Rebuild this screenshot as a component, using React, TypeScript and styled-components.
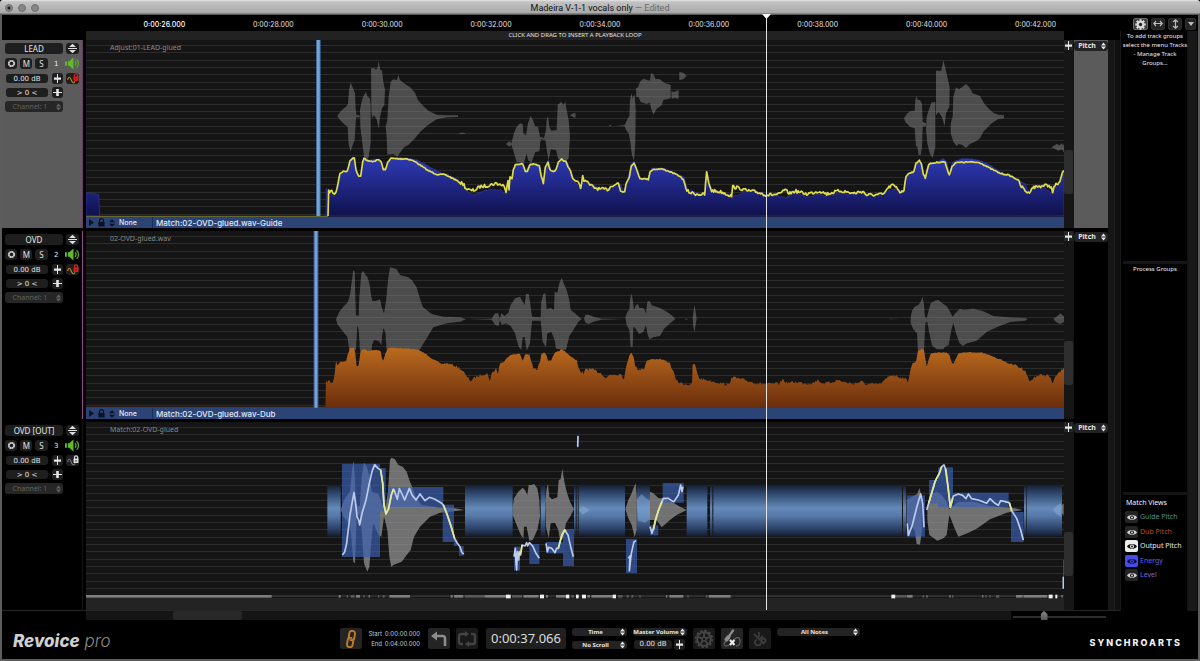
import React from "react";
import styled, { createGlobalStyle } from "styled-components";

const SANS = `"Noto Sans", "Open Sans", sans-serif`;
const UI = `Inter, "Liberation Sans", sans-serif`;
const WIDE = `"DejaVu Sans", "Noto Sans", sans-serif`;

const GlobalStyle = createGlobalStyle`
  * { box-sizing: border-box; }
  body { margin: 0; background: #000; }
  button, select, input { font: inherit; color: inherit; margin: 0; padding: 0; border: 0; }
  h1, h2, p, ul { margin: 0; padding: 0; font-weight: normal; }
  svg { display: block; }
`;

/* ---------- window frame ---------- */

const Window = styled.div`
  min-height: 100vh;
  display: flex;
  flex-direction: column;
  background: #000;
  color: #d6d6d6;
  font-family: ${SANS};
  font-size: 8px;
  line-height: 10px;
`;

const TitleBar = styled.header`
  flex: none;
  height: 15px;
  display: grid;
  grid-template-columns: 1fr auto 1fr;
  align-items: center;
  padding: 0 5px;
  border-radius: 3px 3px 0 0;
  background: linear-gradient(#e4e4e4 0, #c2c2c2 2px, #a9a9a9 13px, #5c5c5c 14px);
`;

const Lights = styled.div`
  display: flex;
  gap: 5px;
`;

const Light = styled.button<{ $dot?: boolean }>`
  width: 8px;
  height: 8px;
  border-radius: 50%;
  border: 1px solid #707070;
  background: ${(p) => (p.$dot ? "radial-gradient(#222 1px, #868686 2px)" : "#868686")};
`;

const Title = styled.h1`
  font-family: Roboto, "Liberation Sans", sans-serif;
  font-size: 9px;
  line-height: 12px;
  color: #111;
  span { color: #6a6a6a; }
`;

const Body = styled.div`
  flex: 1;
  display: flex;
  flex-direction: column;
  border: 2px solid #5c5c5c;
  border-top: 0;
`;

const Work = styled.div`
  flex: 1;
  display: flex;
`;

const Editor = styled.main`
  position: relative;
  flex: 1;
  min-width: 0;
  display: flex;
  flex-direction: column;
`;

/* ---------- ruler ---------- */

const Ruler = styled.div`
  flex: none;
  height: 16px;
  display: grid;
  grid-template-columns: repeat(9, 1fr);
  padding: 4px 30px 0 108px;
  font-family: ${UI};
  font-size: 7px;
  line-height: 12px;
  text-align: center;
  color: #e0e0e0;
  span:first-child { color: #fff; font-weight: 500; }
`;

const LoopBar = styled.div`
  flex: none;
  height: 9px;
  margin: 0 56px 0 84px;
  background: #222;
  text-align: center;
  font-family: ${SANS};
  font-size: 6px;
  line-height: 9px;
  color: #e2e2e2;
`;

/* ---------- tracks ---------- */

const Tracks = styled.div`
  flex: 1;
  display: flex;
  flex-direction: column;
  gap: 3px;
`;

const TrackRow = styled.section`
  flex: 1;
  min-height: 188px;
  display: grid;
  grid-template-columns: 81px minmax(0, 1fr) 10px 34px 12px;
  background: #000;
`;

const TrackHead = styled.div<{ $selected?: boolean; $edge: string }>`
  display: flex;
  flex-direction: column;
  gap: 4px;
  padding: 3px 2px 0 3px;
  border-right: 1px solid ${(p) => p.$edge};
  background: ${(p) => (p.$selected ? "#5b5b5b" : "#000")};
`;

const HeadRow = styled.div<{ $slim?: boolean }>`
  display: flex;
  align-items: center;
  gap: 3px;
  height: ${(p) => (p.$slim ? 9 : 11)}px;
`;

const Chip = styled.button<{ $w: number }>`
  width: ${(p) => p.$w}px;
  height: 11px;
  border-radius: 3px;
  background: #1e1e1e;
  color: #e0e0e0;
  display: flex;
  align-items: center;
  justify-content: center;
`;

const NameInput = styled.input`
  width: 58px;
  height: 11px;
  border-radius: 3px;
  background: #1e1e1e;
  color: #e6e6e6;
  text-align: center;
  font-family: ${SANS};
  font-size: 8px;
`;

const ValueInput = styled.input<{ $w: number }>`
  width: ${(p) => p.$w}px;
  height: 9px;
  margin: 0 1px;
  border-radius: 3px;
  background: #1e1e1e;
  color: #e0e0e0;
  text-align: center;
  font-family: ${WIDE};
  font-size: 7px;
`;

const TrackNumber = styled.span`
  width: 12px;
  text-align: center;
  font-family: ${WIDE};
  font-size: 7px;
  color: #ececec;
`;

const SelectBox = styled.span<{ $dim?: boolean; $w?: number; $h: number }>`
  position: relative;
  display: block;
  width: ${(p) => (p.$w ? `${p.$w}px` : "100%")};
  height: ${(p) => p.$h}px;
  border-radius: 3px;
  background: ${(p) => (p.$dim ? "#262626" : "#232323")};
  color: ${(p) => (p.$dim ? "#626262" : "#e6e6e6")};
  svg { position: absolute; right: 2px; top: 50%; margin-top: -4px; pointer-events: none; }
  select {
    display: block;
    appearance: none;
    width: 100%;
    height: 100%;
    padding-right: 8px;
    background: none;
    outline: 0;
    text-align: center;
    text-align-last: center;
    font-family: ${SANS};
    font-size: ${(p) => (p.$h > 9 ? 7 : 6)}px;
    font-weight: ${(p) => (p.$dim ? 400 : 700)};
    line-height: ${(p) => p.$h}px;
  }
`;

const Lane = styled.div`
  margin-left: 3px;
  position: relative;
  display: flex;
  flex-direction: column;
  background: #151515;
`;

const LaneSvg = styled.svg`
  flex: 1;
  width: 100%;
  height: 0;
`;

const ClipLabel = styled.p`
  position: absolute;
  left: 24px;
  top: 3px;
  font-family: ${SANS};
  font-size: 7px;
  color: #8a8a8a;
`;

const ClipStrip = styled.div`
  flex: none;
  height: 11px;
  display: flex;
  align-items: center;
  padding-left: 3px;
  background: #2b4375;
  color: #e2e8f3;
  font-family: ${UI};
  font-size: 8px;
  font-weight: 500;
`;

const StripControls = styled.div`
  display: flex;
  align-items: center;
  gap: 4px;
  width: 64px;
  height: 11px;
  border-right: 1px solid #1e2f55;
`;

const StripButton = styled.button`
  background: none;
  height: 9px;
  display: flex;
  align-items: center;
`;

const StripSelect = styled.select`
  appearance: none;
  background: none;
  height: 11px;
  line-height: 11px;
  && { font-size: 7px; }
`;

const StripName = styled.span`
  padding-left: 3px;
`;

const ZoomColumn = styled.div`
  background: #161616;
  display: flex;
  flex-direction: column;
  button { width: 9px; height: 10px; background: #262626; display: grid; place-items: center; }
`;

const ZoomThumb = styled.div`
  height: 44px;
  margin: 100px 1px 0 0;
  border-radius: 2px;
  background: #2e2e2e;
`;

const PitchColumn = styled.div<{ $selected?: boolean }>`
  background: ${(p) => (p.$selected ? "#5b5b5b" : "#000")};
  padding-top: 1px;
`;

const Gutter = styled.div`
  margin-bottom: -3px;
  background: linear-gradient(90deg, #161616 6px, #202020 6px, #202020 7px, #111 7px);
  section:last-child > & { margin-bottom: 0; }
`;

const PlayheadArea = styled.div`
  position: absolute;
  top: 0;
  bottom: 10px;
  left: 84px;
  right: 56px;
  pointer-events: none;
`;

const Playhead = styled.div`
  position: absolute;
  top: 0;
  bottom: 0;
  left: 69.5%;
  width: 1px;
  background: #e4e4e4;
  svg { position: absolute; top: -1px; left: -4px; }
`;

const ScrollRow = styled.div`
  flex: none;
  height: 10px;
  display: flex;
  border-top: 1px solid #262626;
  padding-left: 84px;
`;

const ScrollTrack = styled.div`
  flex: 1;
  background: #151515;
`;

const ScrollThumb = styled.div`
  width: 7.5%;
  height: 9px;
  margin-left: 9.4%;
  border-radius: 2px;
  background: #282828;
`;

const ZoomSlider = styled.input`
  appearance: none;
  width: 93px;
  height: 9px;
  margin: 0 14px 0 2px;
  background: linear-gradient(transparent 5px, #2e2e2e 5px, #2e2e2e 7px, transparent 7px);
  &::-webkit-slider-thumb {
    appearance: none;
    width: 7px;
    height: 9px;
    background: linear-gradient(#8a8a8a, #555);
    clip-path: polygon(50% 0, 100% 35%, 100% 100%, 0 100%, 0 35%);
  }
`;

/* ---------- side panel ---------- */

const Side = styled.aside`
  flex: none;
  width: 78px;
  display: flex;
  flex-direction: column;
`;

const SideTools = styled.div`
  height: 16px;
  display: flex;
  justify-content: flex-end;
  align-items: center;
  gap: 3px;
  padding: 1px 2px 0 0;
`;

const ToolButton = styled.button<{ $on?: boolean; $w: number }>`
  width: ${(p) => p.$w}px;
  height: 12px;
  border-radius: 2px;
  background: ${(p) => (p.$on ? "#3c3c3c" : "#242424")};
  border: 1px solid ${(p) => (p.$on ? "#6a6a6a" : "#2e2e2e")};
  display: grid;
  place-items: center;
`;

const SideBody = styled.div`
  flex: 1;
  display: flex;
  flex-direction: column;
  margin-bottom: 9px;
  padding: 0 11px 0 2px;
  background: linear-gradient(270deg, #101010 1px, #191919 2px, #191919 9px, #111 11px, transparent 11px);
  border-left: 1px solid #181818;
`;

const SidePane = styled.section<{ $grow: number }>`
  flex: ${(p) => p.$grow} 0 0;
  border-bottom: ${(p) => (p.$grow > 200 ? "3px solid #151515" : "0")};
  background: #000;
`;

const SideNote = styled.p`
  margin: 0 -3px;
  text-align: center;
  font-family: ${SANS};
  font-size: 6px;
  line-height: 9px;
  color: #f0f0f0;
  padding-top: 1px;
`;

const ViewsTitle = styled.h2`
  padding: 3px 0 2px 3px;
  font-size: 7px;
  line-height: 10px;
  color: #f2f2f2;
`;

const ViewItem = styled.label<{ $color: string }>`
  display: flex;
  align-items: center;
  gap: 2px;
  height: 14px;
  margin: 0 0 1px 2px;
  font-size: 7px;
  white-space: nowrap;
  color: ${(p) => p.$color};
  &:nth-of-type(even) { margin-bottom: 0; }
`;

const EyeBox = styled.span<{ $bg: string; $eye: string }>`
  position: relative;
  width: 13px;
  height: 12px;
  border-radius: 2px;
  background: ${(p) => p.$bg};
  color: ${(p) => p.$eye};
  display: grid;
  place-items: center;
  input { position: absolute; inset: 0; opacity: 0; }
`;

/* ---------- transport ---------- */

const Transport = styled.footer`
  flex: none;
  height: 39px;
  display: flex;
  align-items: center;
  gap: 6px;
  padding: 0 16px 2px 11px;
`;

const Brand = styled.div`
  flex: 0 1 321px;
  font-family: ${UI};
  font-style: italic;
  font-size: 17px;
  line-height: 22px;
  font-weight: 300;
  color: #8b8b8b;
  padding-top: 5px;
  white-space: nowrap;
  b { font-weight: 800; color: #d0d0d0; }
`;

const Square = styled.button<{ $dim?: boolean }>`
  flex: none;
  width: 22px;
  height: 21px;
  border-radius: 2px;
  background: ${(p) => (p.$dim ? "#191919" : "#242424")};
  display: grid;
  place-items: center;
`;

const Range = styled.dl`
  flex: none;
  width: 54px;
  margin: 0;
  display: grid;
  grid-template-columns: 14px 36px;
  column-gap: 2px;
  font-family: ${UI};
  font-size: 6px;
  line-height: 10px;
  text-align: right;
  color: #cacaca;
  dt, dd { margin: 0; }
`;

const Clock = styled.output`
  flex: none;
  width: 80px;
  height: 21px;
  margin-left: 2px;
  border-radius: 2px;
  background: #1f1f1f;
  text-align: center;
  font-family: ${SANS};
  font-size: 13px;
  line-height: 21px;
  color: #dcdcdc;
`;

const Stack = styled.div<{ $w: number }>`
  flex: none;
  width: ${(p) => p.$w}px;
  height: 21px;
  display: flex;
  flex-direction: column;
  justify-content: space-between;
`;

const Volume = styled.div`
  display: flex;
  gap: 1px;
  height: 10px;
  align-items: center;
`;

const Company = styled.div`
  margin-left: auto;
  padding-top: 8px;
  font-family: ${UI};
  font-size: 9px;
  font-weight: 800;
  letter-spacing: 2px;
  color: #f2f2f2;
`;

/* ---------- icons ---------- */

const UpDown = () => (
  <svg width="5" height="8" viewBox="0 0 5 8" fill="currentColor">
    <path d="M0 3.4 2.5.6 5 3.4ZM0 4.6 2.5 7.4 5 4.6Z" />
  </svg>
);
const HeightIcon = () => (
  <svg width="11" height="11" viewBox="0 0 11 11" fill="#dcdcdc">
    <path d="M2 4 5.500.7 9 4ZM1 5h9v1H1ZM2 7 5.500 10.300 9 7Z" />
  </svg>
);
const RingIcon = () => (
  <svg width="9" height="9" viewBox="0 0 9 9">
    <circle cx="4.500" cy="4.500" r="2.700" fill="none" stroke="#cfcfcf" strokeWidth="1.800" strokeDasharray="1.900 .2" />
  </svg>
);
const SpeakerIcon = () => (
  <svg width="16" height="13" viewBox="0 0 16 13">
    <path d="M0 4h2v5H0ZM3 4h1.500L9 0v13L4.500 9H3Z" fill="#63b82e" />
    <path d="M10.500 4a3.200 3.200 0 0 1 0 5M12.300 2a6 6 0 0 1 0 9" fill="none" stroke="#58a828" strokeWidth="1.400" />
  </svg>
);
const FaderIcon = ({ wide }: { wide?: boolean }) => (
  <svg width="9" height="9" viewBox="0 0 9 9" fill="#e6e6e6">
    {wide ? <path d="M0 4h9v1H0ZM3.200 1h2.600v7H3.200Z" /> : <path d="M4 0h1v9H4ZM1 3.400h7v2.400H1Z" />}
  </svg>
);
const CurveLock = ({ locked }: { locked: boolean }) => (
  <svg width="12" height="11" viewBox="0 0 12 11">
    <path d="M.6 7C1.500 3.500 3 3.500 4 6.500S6.500 11 8 8.500" fill="none" stroke={locked ? "#b8862c" : "#777"} strokeWidth="1.100" />
    <path d="M7.500 4V2.500a1.600 1.600 0 0 1 3.200 0V4" fill="none" stroke={locked ? "#d42020" : "#ddd"} strokeWidth="1.200" />
    <rect x="6.500" y="3.500" width="5" height="4.500" rx=".8" fill={locked ? "#d42020" : "#ddd"} />
    <rect x="8.500" y="5" width="1" height="1.600" fill={locked ? "#8a1010" : "#222"} />
  </svg>
);
const EyeIcon = () => (
  <svg width="10" height="7" viewBox="0 0 10 7">
    <path d="M0 3.500C2 .3 8 .3 10 3.500 8 6.700 2 6.700 0 3.500ZM5 1.500a2 2 0 1 0 .01 0Z" fill="currentColor" fillRule="evenodd" />
    <circle cx="5" cy="3.500" r="1" fill="currentColor" />
  </svg>
);
const GearIcon = ({ size, color, hole = 3 }: { size: number; color: string; hole?: number }) => (
  <svg width={size} height={size} viewBox="-10 -10 20 20">
    <g fill={color}>
      {[0, 45, 90, 135].map((a) => (
        <rect key={a} x="-2" y="-9.500" width="4" height="19" transform={`rotate(${a})`} />
      ))}
      <circle r="7" />
    </g>
    <circle r={hole} fill="#242424" />
  </svg>
);
const WheelIcon = () => (
  <svg width="20" height="20" viewBox="-10 -10 20 20" stroke="#454545" fill="none">
    <circle r="8.200" strokeWidth="2" strokeDasharray="2.600 1.690" />
    <circle r="6.800" strokeWidth="1.800" />
    <circle r="2" strokeWidth="1.500" />
    <path d="M0-2v-4M1.900-.6 5.700-1.900M1.200 1.600 3.500 4.900M-1.200 1.600-3.500 4.900M-1.900-.6-5.700-1.900" strokeWidth="1.800" />
  </svg>
);
const LinkIcon = () => (
  <svg width="12" height="18" viewBox="0 0 12 18" fill="none" stroke="#c07a2e" strokeWidth="1.900" strokeLinecap="round">
    <path d="M3.500 8.500 4.300 3.500A2.600 2.600 0 0 1 10 3.800L9.200 8.300A2.600 2.600 0 0 1 5.500 10" />
    <path d="M8.500 9.500 7.700 14.500A2.600 2.600 0 0 1 2 14.200L2.800 9.700A2.600 2.600 0 0 1 6.500 8" />
  </svg>
);
const UndoIcon = () => (
  <svg width="16" height="16" viewBox="0 0 16 16">
    <path d="M5 5h6.500a2.500 2.500 0 0 1 2.500 2.500V15" fill="none" stroke="#8d8d8d" strokeWidth="2.600" />
    <path d="M0 5 6 .5v9Z" fill="#8d8d8d" />
  </svg>
);
const LoopIcon = () => (
  <svg width="20" height="16" viewBox="0 0 20 16">
    <path d="M6 13H4a2 2 0 0 1-2-2V5a2 2 0 0 1 2-2h4M14 3h2a2 2 0 0 1 2 2v6a2 2 0 0 1-2 2h-4" fill="none" stroke="#444" strokeWidth="2.400" />
    <path d="M8 0v6l4-3ZM12 10v6l-4-3Z" fill="#444" />
  </svg>
);
const MicIcon = () => (
  <svg width="20" height="20" viewBox="0 0 20 20" fill="none">
    <path d="M11 1.500 6.500 8" stroke="#8d8d8d" strokeWidth="2.200" strokeLinecap="round" />
    <path d="M6.500 8 4.500 10.500" stroke="#8d8d8d" strokeWidth="4" strokeLinecap="round" />
    <path d="M4 12c-5 5 1 7 5 2s8-8 9-3-2 6-4 6" stroke="#666" strokeWidth="1.100" />
    <path d="m8 11 4.500 5M12.500 11 8 16" stroke="#eee" strokeWidth="2" />
  </svg>
);
const MutedIcon = () => (
  <svg width="16" height="16" viewBox="0 0 16 16" fill="none" stroke="#3b3b3b" strokeWidth="1.800">
    <path d="m2 3 10 10M7 1v5M5 8.500a3 3 0 1 0 4 3M11 5 8 8" />
    <circle cx="11.500" cy="9.500" r="2" />
  </svg>
);
const LockIcon = () => (
  <svg width="7" height="9" viewBox="0 0 7 9">
    <path d="M1.500 4V2.700a2 2 0 0 1 4 0V4" fill="none" stroke="#0c1222" strokeWidth="1.200" />
    <rect x=".4" y="3.900" width="6.200" height="4.600" fill="#0c1222" />
  </svg>
);

/* ---------- waveform data ---------- */

type Pt = [number, number];

// Three units per pixel; every list is relative to the start of its section.
const section = (dx: number, dy: number, data: string): Pt[] =>
  data
    .trim()
    .split(/\s+/)
    .map((pair) => {
      const [x, y] = pair.split(",").map(Number);
      return [x + dx, y + dy] as Pt;
    });

const toPath = (pts: Pt[], close = false) =>
  pts.map(([x, y], i) => `${i ? "L" : "M"}${x.toFixed(1)} ${y.toFixed(1)}`).join("") + (close ? "Z" : "");

// Breaks long segments into short ones with a small repeatable ripple.
const ripple = (pts: Pt[], amp: number, quietFrom: number): Pt[] => {
  let seed = 7;
  const rnd = () => {
    seed = (seed * 16807) % 2147483647;
    return seed / 2147483647 - 0.5;
  };
  const out: Pt[] = [pts[0]];
  for (let i = 1; i < pts.length; i++) {
    const [x0, y0] = pts[i - 1];
    const [x1, y1] = pts[i];
    const n = Math.max(1, Math.floor((x1 - x0) / 3));
    for (let k = 1; k <= n; k++) {
      const y = y0 + ((y1 - y0) * k) / n;
      const a = y > 520 ? 0 : y > quietFrom ? amp : amp / 3;
      out.push([x0 + ((x1 - x0) * k) / n, y + rnd() * a]);
    }
  }
  return out;
};

const leadLine: Pt[] = [
  ...section(642, -30, `84,558 86,485 95,484 103,492 108,488 114,458 120,430 124,428 130,424 142,424 150,392 158,384 163,385 168,420 176,438 182,438 188,395 192,385 205,394 220,394 236,389 243,395 250,418 256,420 264,395 272,385 300,387 318,386 335,390 350,398 370,412 385,422 410,433 435,434 460,446 478,456 492,464 498,476 512,482 525,480 540,470 560,467 590,460 600,464 612,466 618,490 624,450 627,475 630,440 636,445 640,420 646,405 655,402 668,402 676,424 682,424 690,403 705,403 718,408 724,440 730,458 736,410 744,396 750,420 760,424 768,420 775,398 785,388 798,396 804,410 812,424 818,445 826,452 834,455 842,478 848,435 852,455 856,450 866,462 880,472 900,478 925,478 935,466 955,460 962,484 974,484 978,460 988,440 994,408 1002,398 1010,420 1020,445 1045,448 1050,425 1060,418 1085,417 1110,425 1138,438`),
  ...section(1782, -120, `0,530 10,538 18,570 30,578 50,582 74,584 77,550 80,515 86,550 95,572 125,576 155,588 158,560 180,565 200,572 230,576 260,585 300,583 312,570 330,580 345,573 380,582 420,573 440,582 480,572 510,578 520,580 548,574 560,585 600,584 614,582 618,570 636,555 652,565 660,576 672,570 678,530 685,520 702,515 708,490 718,480 724,492 730,522 736,534 746,493 755,490 780,486 795,486 802,510 808,524 816,500 826,488 870,486 900,488 930,505 960,520 985,525 1000,532 1014,540 1024,560 1045,580 1055,564 1070,560 1100,556 1114,560 1118,582 1122,560 1140,545 1148,515 1152,512`),
];

const leadFill: Pt[] = [
  ...section(642, -30, `78,558 79,478 86,490 103,500 110,480 120,440 130,424 142,424 150,392 158,380 165,410 176,440 182,438 190,390 205,390 236,387 250,418 256,420 266,390 290,382 320,384 350,390 385,408 420,428 440,432 470,448 492,465 502,485 520,496 535,490 545,482 580,478 608,482 618,492 626,460 636,440 645,405 668,400 676,424 690,401 718,406 730,458 740,400 745,390 752,422 768,420 777,396 785,386 800,392 815,430 825,455 842,478 848,455 870,462 900,478 930,475 960,462 974,484 984,445 994,400 1002,394 1012,425 1022,445 1045,448 1055,415 1085,414 1110,422 1138,436`),
  ...section(1782, -120, `0,528 12,530 22,568 50,580 76,580 79,513 86,548 98,574 130,580 155,592 180,585 200,572 215,568 240,578 270,588 300,590 320,592 345,580 380,590 420,582 440,588 480,578 510,584 545,578 560,588 600,586 618,575 640,566 670,572 680,525 702,514 714,480 722,488 734,530 746,492 775,484 790,475 800,485 808,522 818,486 845,477 875,476 905,484 935,498 960,516 1000,530 1014,540 1035,552 1048,578 1058,564 1085,558 1104,572 1116,584 1125,562 1142,545 1152,512`),
];

const dubFill: Pt[] = [
  ...section(642, -3, `76,534 78,455 86,452 98,460 104,430 108,392 112,405 120,396 138,394 144,370 150,355 162,352 166,370 170,405 176,405 182,362 192,358 205,362 232,360 242,364 246,385 250,390 256,372 264,355 280,353 310,355 340,357 360,362 380,374 400,388 425,402 440,400 460,405 480,415 490,425 498,438 512,452 530,440 550,432 562,432 570,450 576,430 588,415 594,430 600,400 610,398 618,385 630,376 645,372 660,372 668,392 676,372 688,374 694,395 700,415 712,420 720,395 724,372 732,366 738,372 744,392 754,390 764,370 785,358 800,368 815,382 830,390 836,415 842,430 848,425 850,438 856,415 880,420 905,430 918,445 930,434 965,432 972,450 980,405 988,376 994,366 1000,380 1006,408 1015,418 1032,416 1040,392 1055,388 1080,387 1095,392 1110,400 1120,425 1128,450 1138,458`),
  ...section(1782, -3, `0,458 12,462 36,464 38,404 44,402 50,425 58,445 90,452 125,460 148,465 154,440 175,446 200,452 230,460 260,463 298,460 308,448 320,458 350,456 380,461 400,458 414,450 428,460 450,458 472,450 495,457 520,461 545,455 560,464 600,462 614,452 630,436 640,435 655,440 672,444 684,454 692,415 698,400 708,395 714,362 726,357 732,360 736,385 740,408 746,390 752,370 780,367 800,367 808,375 814,395 820,405 826,388 836,370 870,366 905,368 935,378 965,390 985,400 1005,405 1025,415 1036,420 1044,445 1052,455 1064,440 1085,435 1105,436 1112,448 1118,458 1130,435 1144,422 1152,410`),
];

const leadShapes: Pt[][] = [
  ...[
    "112,258 120,246 130,236 138,230 144,222 147,180 152,158 158,172 165,190 167,240 170,256 178,256 180,262 168,262 164,330 158,345 152,364 146,345 143,290 132,282 120,270",
    "180,240 186,210 192,195 198,186 202,200 210,205 212,230 212,340 206,380 200,392 192,380 186,330 181,290",
    "213,115 222,114 226,118 232,116 236,92 240,118 246,122 250,155 255,180 253,225 246,235 240,262 236,298 230,268 222,256 216,264 214,240",
    "257,290 262,270 266,200 272,155 280,148 290,150 295,135 300,150 312,160 330,172 345,188 355,212 370,228 385,242 410,254 440,256 474,256 474,261 440,262 410,268 385,284 360,306 345,325 325,345 312,352 300,368 292,380 280,372 262,374 260,320",
    "476,309 490,308 500,311 480,312",
    "618,342 628,334 634,340 642,310 650,290 660,280 668,282 670,310 678,316 684,280 692,258 700,272 706,290 714,290 720,320 732,324 738,300 740,270 744,258 748,290 754,302 770,300 773,225 784,215 790,226 796,216 800,240 806,270 810,320 806,385 800,392 775,388 768,360 752,358 746,392 742,370 736,330 722,328 718,364 706,366 694,398 684,390 680,370 672,398 650,396 640,362 634,344 628,350",
    "810,256 820,250 827,250 826,264 818,260",
    "928,285 933,285 933,289 928,289",
    "948,287 974,286 982,268 988,258 990,210 994,190 998,205 1004,192 1007,240 1006,340 1002,392 996,375 990,330 986,310 978,300 974,289",
    "1008,175 1014,172 1020,155 1030,146 1042,150 1050,152 1053,130 1060,132 1066,146 1080,148 1092,158 1112,165 1112,205 1090,210 1085,226 1070,236 1060,254 1053,235 1050,218 1040,222 1022,216 1015,200 1009,200",
    "1114,184 1122,186 1136,180 1136,206 1125,204 1115,206",
    "1138,126 1150,128 1160,138 1150,148 1138,150",
  ].map((s) => section(642, -30, s)),
  ...[
    "672,355 680,342 690,334 704,332 706,300 710,288 713,300 720,300 726,312 728,365 738,370 738,378 728,380 726,440 722,465 716,465 712,440 708,438 704,385 690,380 676,366",
    "740,350 748,325 754,308 766,305 766,440 758,474 750,462 742,430 738,390",
    "768,212 784,212 790,180 796,205 802,230 809,262 808,320 798,340 794,378 786,352 776,336 768,346",
    "812,370 818,350 820,290 828,262 836,268 846,262 858,252 868,262 878,280 900,288 912,310 925,325 940,338 955,344 972,346 972,355 955,357 935,370 910,395 900,415 885,425 870,432 858,444 846,434 836,432 830,438 820,425 812,400",
    "1114,442 1130,432 1140,436 1144,430 1150,436 1152,428 1152,458 1146,448 1136,452",
  ].map((s) => section(1782, -120, s)),
];

const dubShapes: Pt[][] = [
  ...[
    "108,268 118,245 132,228 144,216 150,195 156,150 160,120 164,125 166,200 168,255 176,258 178,200 184,130 190,122 196,135 202,140 208,160 214,200 218,214 230,212 240,208 246,235 252,250 258,215 264,150 270,112 280,114 290,118 300,135 325,142 335,150 350,172 358,200 368,230 380,240 395,252 430,260 480,262 498,268 480,275 440,280 400,292 380,325 364,350 358,362 260,362 256,305 250,295 246,320 244,345 236,332 222,330 216,345 214,364 180,362 176,300 172,285 168,360 148,360 142,320 125,300 112,282",
    "498,267 575,266 585,250 595,250 597,262 600,264 604,250 614,258 625,248 632,225 645,205 660,200 668,215 674,225 678,192 686,192 690,215 696,260 722,262 724,215 730,192 736,190 740,238 752,234 762,240 764,185 772,188 778,160 785,143 792,162 800,180 808,210 812,240 825,250 838,262 845,267 835,275 820,300 808,318 798,360 768,356 764,330 754,306 742,310 738,352 728,335 722,272 696,272 690,340 680,362 674,320 668,322 664,360 656,350 645,310 632,288 618,280 606,284 600,272 595,288 585,284 575,269",
    "852,267 856,254 866,254 880,260 905,266 976,267 905,269 880,275 866,282 857,278",
    "976,262 982,245 988,240 990,210 995,190 999,215 1002,240 1008,225 1014,222 1018,234 1030,234 1038,250 1042,215 1048,212 1055,226 1080,234 1100,245 1115,256 1126,267 1108,282 1092,296 1080,318 1060,322 1048,328 1042,310 1038,285 1030,305 1018,312 1006,295 1000,290 998,350 992,350 988,300 980,285",
  ].map((s) => section(642, -3, s)),
  ...[
    "38,267 41,240 43,225 46,240 50,266 46,290 43,306 40,290",
    "16,266 22,266 22,269 16,269",
    "628,266 660,267 628,268",
    "692,262 696,242 704,230 715,225 722,215 728,200 732,225 735,260 740,265 745,245 752,220 765,212 775,210 790,222 800,228 810,245 818,260 826,250 840,236 850,240 880,236 910,244 940,258 980,262 1035,264 1043,268 1035,272 990,276 950,292 920,306 890,332 862,340 848,348 838,338 828,310 820,278 814,300 806,345 795,350 790,358 770,358 756,346 748,310 742,275 736,280 732,362 714,362 711,310 700,298 692,280",
    "1120,267 1132,258 1142,250 1152,260 1152,276 1140,282 1128,276",
  ].map((s) => section(1782, -3, s)),
];

const outShapes: Pt[][] = [
  ...[
    "93,270 98,250 108,230 120,215 126,150 131,122 135,180 137,250 145,262 150,255 155,170 162,128 170,140 178,165 185,215 205,222 215,250 222,268 228,255 234,215 240,120 244,113 255,118 265,135 278,140 290,155 298,180 308,205 318,235 335,255 380,262 430,264 464,270 430,274 390,278 360,290 330,320 312,350 302,390 290,405 275,425 250,435 244,442 238,410 232,330 222,290 214,350 205,345 190,310 185,350 178,440 172,455 162,430 155,330 148,280 140,290 135,430 130,425 124,350 118,310 100,290",
    "608,262 612,235 625,215 638,203 645,210 652,225 656,195 664,195 672,192 682,205 688,240 690,290 682,330 668,360 658,362 650,320 642,320 640,356 630,340 618,310 608,285",
    "706,240 710,205 714,192 718,230 726,238 742,232 746,180 752,178 757,146 763,185 770,215 780,245 792,268 780,290 768,310 760,355 750,360 745,330 735,308 722,310 716,355 708,320",
    "946,268 955,240 965,220 970,205 977,190 980,230 980,330 974,352 965,315 955,295",
    "1020,215 1030,220 1045,234 1065,236 1090,248 1110,260 1130,270 1100,285 1080,300 1055,322 1040,300 1020,300",
  ].map((s) => section(672, -6, s)),
  ...[
    "680,240 700,228 712,222 718,204 724,225 726,330 720,374 710,372 704,330 680,305",
    "742,260 750,225 770,215 785,225 800,245 808,268 814,262 835,246 880,245 930,258 1000,264 1028,270 980,278 930,298 890,326 862,340 835,350 822,320 808,285 800,345 790,355 772,362 748,345 742,300",
    "1146,255 1151,250 1151,285 1146,280",
  ].map((s) => section(1782, -6, s)),
];

// Unvoiced bands: start and end of each.
const bands: Pt[] = [
  [724, 764], [1137, 1280], [1364, 1378], [1464, 1469], [1472, 1475], [1478, 1617],
  [1652, 1692], [1802, 1864], [1872, 1879], [1882, 2448], [2451, 2460], [2814, 2820], [2822, 2928],
];

// Note blocks: x, y, width, height.
const notes: [number, number, number, number][] = [
  [768, 126, 114, 279], [882, 138, 17, 130], [906, 195, 166, 60], [1070, 248, 34, 112], [1104, 352, 10, 20], [1119, 372, 14, 29],
  [1284, 374, 18, 72], [1330, 366, 30, 60], [1380, 360, 52, 34], [1431, 321, 33, 111], [1620, 351, 33, 102],
  [1692, 310, 25, 30], [1730, 183, 63, 59], [2462, 220, 55, 124], [2529, 174, 27, 70], [2556, 136, 45, 120],
  [2602, 212, 166, 44], [2775, 270, 38, 90], [2931, 414, 3, 86], [1473, 40, 5, 36],
];

const pitchLines: Pt[][] = [
  ...[
    "97,405 104,396 110,370 120,285 126,250 132,218 137,250 141,290 146,300 149,315 156,280 168,240 178,190 186,155 194,134 204,145 212,150 218,190 222,255 228,282 236,265 244,225 250,208 254,215 262,238 268,206 276,222 284,240 292,220 298,205 306,225 318,240 330,222 345,242 358,232 375,238 395,250 400,255 412,285 425,325 434,356 442,370 450,380 455,395 461,403",
    "612,410 616,385 618,430 620,450 622,395 626,420 628,395 632,405 636,375 645,378 650,368 653,378 658,368 668,378 678,400 688,415",
    "708,370 712,395 716,382 725,385 735,398 740,385 745,385 756,345 764,330 774,345 782,380 790,410",
    "955,415 960,408 958,452 964,400 972,365 978,362",
    "1020,320 1026,340 1032,320 1044,275 1060,235 1075,235 1085,242 1092,245 1105,225 1112,195 1116,215 1119,200",
    "804,48 803,80",
  ].map((s) => section(672, -6, s)),
  ...[
    "682,310 685,346 697,315 712,255 722,222 728,250 732,322",
    "740,270 746,250 765,185 778,160 785,140 792,135 798,150 804,200 811,262 820,228 835,222 848,226 858,236 865,222 875,236 895,240 920,250 930,236 945,250 955,256 962,242 988,248 995,272 1010,295 1022,330 1030,360",
    "1150,506 1150,470",
  ].map((s) => section(1782, -6, s)),
];

const accentLines: Pt[][] = [
  ...[
    "212,150 218,190 222,255 228,282 236,265 244,225 250,208 254,215",
    "400,255 412,285 425,325 434,356",
    "628,405 633,395 636,375",
    "745,385 750,365 756,345 764,330 768,333",
    "1030,330 1036,300 1044,275 1056,244",
  ].map((s) => section(672, -6, s)),
  ...["746,250 765,185 770,175 778,160 785,140", "796,145 804,200 811,262 818,235", "988,248 995,272"].map((s) => section(1782, -6, s)),
];

// Event markers along the foot of the output lane: x, width, brightness step.
const events: [number, number, number][] = [
  [0, 557, 1], [758, 6, 1], [782, 4, 0], [794, 12, 0], [810, 12, 1], [832, 4, 0], [848, 4, 1], [876, 4, 0], [890, 6, 0],
  [910, 62, 1], [1094, 6, 1], [1104, 28, 1], [1136, 60, 0], [1196, 64, 1], [1260, 14, 2],
  [1278, 30, 0], [1312, 46, 1], [1362, 12, 2], [1380, 6, 1], [1410, 30, 1], [1440, 10, 2], [1456, 8, 0], [1470, 8, 2],
  [1488, 12, 2], [1504, 8, 1], [1516, 64, 1], [1580, 10, 2], [1596, 14, 0], [1622, 6, 0], [1636, 6, 0], [1660, 4, 0],
  [1740, 4, 1], [1750, 42, 1], [1804, 4, 0], [1860, 4, 0], [1868, 66, 1], [2416, 12, 2], [2430, 30, 0], [2462, 18, 1],
  [2510, 4, 0], [2520, 6, 0], [2590, 4, 1], [2598, 4, 0], [2688, 4, 1], [2698, 4, 0], [2710, 4, 0], [2730, 10, 0],
  [2790, 20, 1], [2812, 72, 1], [2888, 12, 2], [2908, 6, 2], [2926, 4, 1],
];

const Staff = ({ bottom, offset }: { bottom: number; offset: number }) => (
  <g fill="#2c2c2c">
    {Array.from({ length: 25 }, (_, i) => Math.round((offset + 22 * i) / 3) * 3)
      .filter((y) => y < bottom)
      .map((y) => (
        <rect key={y} x="0" y={y} width="2934" height="3" />
      ))}
  </g>
);

const Shapes = ({ shapes, tone }: { shapes: Pt[][]; tone: string }) => (
  <g fill={tone}>
    {shapes.map((s, i) => (
      <path key={i} d={toPath(s, true)} />
    ))}
  </g>
);

const closeTo = (pts: Pt[], floor: number): Pt[] => [...pts, [2934, floor], [pts[0][0], floor]];

const LeadLane = () => (
  <LaneSvg viewBox="0 0 2934 531" preserveAspectRatio="none" role="img" aria-label="Lead waveform">
    <defs>
      <linearGradient id="leadBlue" gradientUnits="userSpaceOnUse" x1="0" y1="350" x2="0" y2="528">
        <stop offset="0" stopColor="#2e3bb8" />
        <stop offset="1" stopColor="#10114c" />
      </linearGradient>
    </defs>
    <Staff bottom={528} offset={15} />
    <Shapes shapes={leadShapes} tone="rgba(140,140,140,.48)" />
    <path d={toPath(closeTo(ripple(leadFill, 7, 430), 528), true)} fill="url(#leadBlue)" stroke="#3436a8" strokeWidth="2" />
    <path d="M0 528V460l6-2 4 3 6-3 4 4 6-2 4 3 8 0 3 66Z" fill="url(#leadBlue)" stroke="#3436a8" strokeWidth="2" />
    <path d="M0 529H726" stroke="#77763c" strokeWidth="3" />
    <path d={toPath(ripple(leadLine, 10, 425))} fill="none" stroke="#dfdd4e" strokeWidth="5" strokeLinejoin="round" />
    <rect x="690" y="0" width="14" height="528" fill="#41699c" />
    <rect x="693" y="0" width="8" height="528" fill="#74a5d8" />
  </LaneSvg>
);

const DubLane = () => (
  <LaneSvg viewBox="0 0 2934 531" preserveAspectRatio="none" role="img" aria-label="Dub waveform">
    <defs>
      <linearGradient id="dubOrange" gradientUnits="userSpaceOnUse" x1="0" y1="350" x2="0" y2="530">
        <stop offset="0" stopColor="#bb6a1e" />
        <stop offset="1" stopColor="#6a2d0c" />
      </linearGradient>
    </defs>
    <Staff bottom={528} offset={15} />
    <Shapes shapes={dubShapes} tone="rgba(140,140,140,.48)" />
    <path d="M0 529H720" stroke="#7a3a14" strokeWidth="3" />
    <path d={toPath(closeTo(ripple(dubFill, 9, 400), 531), true)} fill="url(#dubOrange)" />
    <rect x="683" y="0" width="14" height="530" fill="#41699c" />
    <rect x="686" y="0" width="8" height="530" fill="#7aa0dc" />
  </LaneSvg>
);

const OutLane = () => (
  <LaneSvg viewBox="0 0 2934 564" preserveAspectRatio="none" role="img" aria-label="Output pitch">
    <defs>
      <linearGradient id="band" x1="0" y1="0" x2="0" y2="1">
        <stop offset="0" stopColor="#161d2c" />
        <stop offset=".15" stopColor="#2b4369" />
        <stop offset=".45" stopColor="#6589b8" />
        <stop offset=".6" stopColor="#5679a9" />
        <stop offset=".88" stopColor="#263a5e" />
        <stop offset="1" stopColor="#151a26" />
      </linearGradient>
    </defs>
    <Staff bottom={520} offset={14} />
    {bands.map(([a, b]) => (
      <rect key={a} x={a} y="188" width={b - a} height="156" fill="url(#band)" />
    ))}
    <path d={toPath(section(672, -6, "980,238 995,222 1008,235 1020,242 1020,298 1005,308 985,302"), true)} fill="rgba(128,168,216,.5)" />
    <path d="M1478 264l12-12 22 12-22 14ZM2900 264l14-14 12-6v40l-12-6Z" fill="rgba(140,178,220,.5)" />
    <Shapes shapes={outShapes} tone="rgba(150,150,150,.72)" />
    <g fill="rgba(60,96,178,.68)">
      {notes.map(([x, y, w, h]) => (
        <rect key={`${x}-${y}`} x={x} y={y} width={w} height={h} />
      ))}
    </g>
    <g fill="none" strokeWidth="5" strokeLinejoin="round">
      {pitchLines.map((l, i) => (
        <path key={i} d={toPath(l)} stroke="#bccbea" />
      ))}
      {accentLines.map((l, i) => (
        <path key={i} d={toPath(l)} stroke="#e3ea8c" />
      ))}
    </g>
    <rect y="528" width="2934" height="36" fill="#232323" />
    <rect y="522" width="2934" height="3" fill="#303030" />
    {events.map(([x, w, k]) => (
      <rect key={x} x={x} y={k === 2 ? 518 : 519} width={w} height={k === 2 ? 11 : 8} fill={["#585858", "#7d7d7d", "#f0f0f0"][k]} />
    ))}
  </LaneSvg>
);

/* ---------- composed parts ---------- */

type TrackProps = {
  index: number;
  name: string;
  clip: string;
  strip?: string;
  selected?: boolean;
  locked: boolean;
  edge: string;
  children: React.ReactNode;
};

const Track = ({ index, name, clip, strip, selected, locked, edge, children }: TrackProps) => (
  <TrackRow aria-label={name}>
    <TrackHead $selected={selected} $edge={edge}>
      <HeadRow>
        <NameInput aria-label={`Track ${index} name`} defaultValue={name} />
        <Chip $w={13} aria-label="Track height"><HeightIcon /></Chip>
      </HeadRow>
      <HeadRow>
        <Chip $w={13} aria-label="Record"><RingIcon /></Chip>
        <Chip $w={13}>M</Chip>
        <Chip $w={13}>S</Chip>
        <TrackNumber>{index}</TrackNumber>
        <SpeakerIcon />
      </HeadRow>
      <HeadRow>
        <ValueInput $w={42} aria-label={`Track ${index} level`} defaultValue="0.00 dB" />
        <Chip $w={11} aria-label="Level fader"><FaderIcon /></Chip>
        <Chip $w={13} aria-label="Pitch lock"><CurveLock locked={locked} /></Chip>
      </HeadRow>
      <HeadRow $slim>
        <ValueInput $w={42} aria-label={`Track ${index} pan`} defaultValue="> 0 <" />
        <Chip $w={11} aria-label="Pan fader"><FaderIcon wide /></Chip>
      </HeadRow>
      <SelectBox $dim $w={58} $h={11}>
        <select aria-label={`Track ${index} channel`}><option>Channel: 1</option></select>
        <UpDown />
      </SelectBox>
    </TrackHead>
    <Lane>
      {children}
      <ClipLabel>{clip}</ClipLabel>
      {strip && (
        <ClipStrip>
          <StripControls>
            <StripButton aria-label="Play">
              <svg width="5" height="7" viewBox="0 0 5 7"><path d="M0 0v7l5-3.500Z" fill="#0c1222" /></svg>
            </StripButton>
            <StripButton aria-label="Lock"><LockIcon /></StripButton>
            <svg width="6" height="8" viewBox="0 0 6 8"><path d="M0 3.300 3 .3 6 3.300ZM0 4.700 3 7.700 6 4.700Z" fill="#0c1222" /></svg>
            <StripSelect aria-label={`Process for track ${index}`}><option>None</option></StripSelect>
          </StripControls>
          <StripName>{strip}</StripName>
        </ClipStrip>
      )}
    </Lane>
    <ZoomColumn>
      <button aria-label="Vertical zoom"><FaderIcon /></button>
      <ZoomThumb />
    </ZoomColumn>
    <PitchColumn $selected={selected}>
      <SelectBox $h={10}>
        <select aria-label={`Track ${index} view`}><option>Pitch</option></select>
        <UpDown />
      </SelectBox>
    </PitchColumn>
    <Gutter />
  </TrackRow>
);

const times = ["26", "28", "30", "32", "34", "36", "38", "40", "42"];

const views = [
  { name: "Guide Pitch", color: "#4a929c", bg: "#242424", eye: "#cfcfcf", on: false },
  { name: "Dub Pitch", color: "#bd4a1e", bg: "#242424", eye: "#cfcfcf", on: false },
  { name: "Output Pitch", color: "#e8e8e8", bg: "#ececec", eye: "#111", on: true },
  { name: "Energy", color: "#5c62f2", bg: "#474ce8", eye: "#10103a", on: true },
  { name: "Level", color: "#7a68d4", bg: "#242424", eye: "#cfcfcf", on: false },
];

export default function App() {
  return (
    <Window>
      <GlobalStyle />
      <TitleBar>
        <Lights>
          <Light $dot aria-label="Close" />
          <Light aria-label="Minimise" />
          <Light aria-label="Zoom" />
        </Lights>
        <Title>Madeira V-1-1 vocals only <span>— Edited</span></Title>
      </TitleBar>
      <Body>
        <Work>
          <Editor>
            <Ruler>
              {times.map((t) => (
                <span key={t}>0:00:{t}.000</span>
              ))}
            </Ruler>
            <LoopBar>CLICK AND DRAG TO INSERT A PLAYBACK LOOP</LoopBar>
            <Tracks>
              <Track index={1} name="LEAD" clip="Adjust:01-LEAD-glued" strip="Match:02-OVD-glued.wav-Guide" selected locked edge="#6d3868">
                <LeadLane />
              </Track>
              <Track index={2} name="OVD" clip="02-OVD-glued.wav" strip="Match:02-OVD-glued.wav-Dub" locked edge="#9a4690">
                <DubLane />
              </Track>
              <Track index={3} name="OVD [OUT]" clip="Match:02-OVD-glued" locked={false} edge="#141414">
                <OutLane />
              </Track>
            </Tracks>
            <ScrollRow>
              <ScrollTrack><ScrollThumb /></ScrollTrack>
              <ZoomSlider type="range" aria-label="Horizontal zoom" defaultValue={32} />
            </ScrollRow>
            <PlayheadArea>
              <Playhead>
                <svg width="9" height="5" viewBox="0 0 9 5"><path d="M0 0h9L4.500 5Z" fill="#fff" /></svg>
              </Playhead>
            </PlayheadArea>
          </Editor>
          <Side>
            <SideTools>
              <ToolButton $on $w={15} aria-label="Settings"><GearIcon size={11} color="#d8d8d8" /></ToolButton>
              <ToolButton $w={14} aria-label="Fit width">
                <svg width="10" height="7" viewBox="0 0 10 7" fill="none" stroke="#bdbdbd" strokeWidth="1.200"><path d="M.8 3.500h8.400M3 1 .8 3.500 3 6M7 1l2.200 2.500L7 6" /></svg>
              </ToolButton>
              <ToolButton $w={14} aria-label="Fit height">
                <svg width="7" height="10" viewBox="0 0 7 10" fill="none" stroke="#bdbdbd" strokeWidth="1.200"><path d="M3.500.8v8.400M1 3 3.500.8 6 3M1 7l2.500 2.200L6 7" /></svg>
              </ToolButton>
              <ToolButton $w={11} aria-label="More">
                <svg width="6" height="4" viewBox="0 0 6 4"><path d="M0 0h6L3 4Z" fill="#bdbdbd" /></svg>
              </ToolButton>
            </SideTools>
            <SideBody>
              <SidePane $grow={232}>
                <SideNote>
                  To add track groups
                  <br />
                  select the menu Tracks
                  <br />
                  - Manage Track
                  <br />
                  Groups...
                </SideNote>
              </SidePane>
              <SidePane $grow={231}>
                <SideNote>Process Groups</SideNote>
              </SidePane>
              <SidePane $grow={117}>
                <ViewsTitle>Match Views</ViewsTitle>
                {views.map((v) => (
                  <ViewItem key={v.name} $color={v.color}>
                    <EyeBox $bg={v.bg} $eye={v.eye}>
                      <input type="checkbox" defaultChecked={v.on} />
                      <EyeIcon />
                    </EyeBox>
                    {v.name}
                  </ViewItem>
                ))}
              </SidePane>
            </SideBody>
          </Side>
        </Work>
        <Transport>
          <Brand><b>Revoice</b> pro</Brand>
          <Square aria-label="Link"><LinkIcon /></Square>
          <Range>
            <dt>Start</dt><dd>0:00:00.000</dd>
            <dt>End</dt><dd>0:04:00.000</dd>
          </Range>
          <Square aria-label="Undo"><UndoIcon /></Square>
          <Square $dim aria-label="Loop"><LoopIcon /></Square>
          <Clock>0:00:37.066</Clock>
          <Stack $w={55}>
            <SelectBox $h={8}><select aria-label="Display units"><option>Time</option></select><UpDown /></SelectBox>
            <SelectBox $h={8}><select aria-label="Scroll mode"><option>No Scroll</option></select><UpDown /></SelectBox>
          </Stack>
          <Stack $w={54}>
            <SelectBox $h={8}><select aria-label="Output"><option>Master Volume</option></select><UpDown /></SelectBox>
            <Volume>
              <ValueInput $w={38} aria-label="Master volume" defaultValue="0.00 dB" />
              <Chip $w={11} aria-label="Volume fader"><FaderIcon /></Chip>
            </Volume>
          </Stack>
          <Square $dim aria-label="Process"><WheelIcon /></Square>
          <Square aria-label="Input off"><MicIcon /></Square>
          <Square $dim aria-label="Notes off"><MutedIcon /></Square>
          <Stack $w={83}>
            <SelectBox $h={8}><select aria-label="Notes shown"><option>All Notes</option></select><UpDown /></SelectBox>
          </Stack>
          <Company>SYNCHROARTS</Company>
        </Transport>
      </Body>
    </Window>
  );
}
